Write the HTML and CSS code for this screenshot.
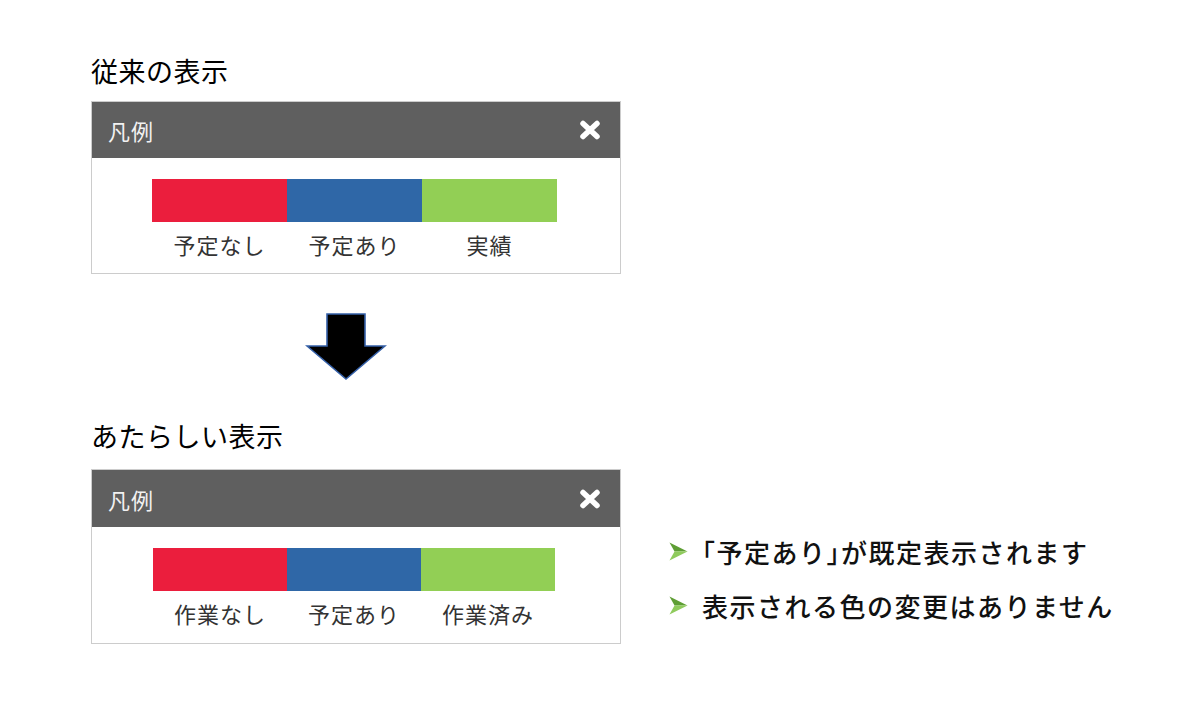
FILE: index.html
```html
<!DOCTYPE html>
<html>
<head>
    <title>凡例の表示</title>
    <link rel="stylesheet" href="styles.css">
</head>
<body>
    <div class="page">
        <h2 class="title first">従来の表示</h2>
        <div class="panel">
            <div class="panel-head">
                <span>凡例</span>
                <svg class="close" width="22" height="20" viewBox="0 0 22 20">
                    <path d="M4 3.5 L18 16.5 M18 3.5 L4 16.5" stroke="#fff" stroke-width="5.5" stroke-linecap="round"/>
                </svg>
            </div>
            <div class="panel-body">
                <div class="legend">
                    <div class="bars">
                        <div class="bar red"></div>
                        <div class="bar blue"></div>
                        <div class="bar green"></div>
                    </div>
                    <div class="labels">
                        <span>予定なし</span>
                        <span>予定あり</span>
                        <span>実績</span>
                    </div>
                </div>
            </div>
        </div>

        <div class="arrow">
            <svg width="82" height="68" viewBox="0 0 82 68">
                <polygon points="22,1 60,1 60,33 80,33 41,66 2,33 22,33" fill="#000" stroke="#3560a8" stroke-width="1.6"/>
            </svg>
        </div>

        <h2 class="title second">あたらしい表示</h2>
        <div class="row">
            <div class="panel new">
                <div class="panel-head">
                    <span>凡例</span>
                    <svg class="close" width="22" height="20" viewBox="0 0 22 20">
                        <path d="M4 3.5 L18 16.5 M18 3.5 L4 16.5" stroke="#fff" stroke-width="5.5" stroke-linecap="round"/>
                    </svg>
                </div>
                <div class="panel-body">
                    <div class="legend">
                        <div class="bars">
                            <div class="bar red"></div>
                            <div class="bar blue"></div>
                            <div class="bar green"></div>
                        </div>
                        <div class="labels">
                            <span>作業なし</span>
                            <span>予定あり</span>
                            <span>作業済み</span>
                        </div>
                    </div>
                </div>
            </div>
            <ul class="notes">
                <li>
                    <svg class="mark" width="19" height="19" viewBox="0 0 19 19">
                        <polygon points="0.5,0.5 18.5,9.5 5.5,9.5" fill="#5e9e34"/>
                        <polygon points="5.5,9.5 18.5,9.5 0.5,18.5" fill="#8fcb5c"/>
                    </svg>
                    <span><span class="br">「</span>予定あり<span class="br">」</span>が既定表示されます</span>
                </li>
                <li>
                    <svg class="mark" width="19" height="19" viewBox="0 0 19 19">
                        <polygon points="0.5,0.5 18.5,9.5 5.5,9.5" fill="#5e9e34"/>
                        <polygon points="5.5,9.5 18.5,9.5 0.5,18.5" fill="#8fcb5c"/>
                    </svg>
                    <span>表示される色の変更はありません</span>
                </li>
            </ul>
        </div>
    </div>
</body>
</html>
```

FILE: styles.css
```css
body {
    margin: 0;
    padding: 0;
    background-color: #ffffff;
    font-family: "Noto Sans CJK JP", "Noto Sans", sans-serif;
}
.page {
    padding-left: 91px;
}
.title {
    margin: 0;
    font-size: 27px;
    font-weight: normal;
    line-height: 36px;
    letter-spacing: 0.5px;
    color: #000000;
}
.title.first {
    padding-top: 53px;
    margin-bottom: 12px;
}
.title.second {
    margin-top: 37px;
    margin-bottom: 15px;
}
.panel {
    width: 528px;
    border: 1px solid #cccccc;
    flex-shrink: 0;
}
.panel-head {
    height: 56px;
    background-color: #5f5f5f;
    display: flex;
    align-items: center;
    justify-content: space-between;
    padding: 0 19px 0 16px;
    color: #f2f2f2;
    font-size: 22px;
    letter-spacing: 1px;
}
.panel.new .panel-head {
    height: 57px;
}
.close {
    display: block;
}
.panel-body {
    padding: 21px 0 7px 60px;
}
.panel.new .panel-body {
    padding-bottom: 8px;
    padding-left: 61px;
}
.legend {
    width: 405px;
}
.panel.new .legend {
    width: 402px;
}
.bars {
    display: flex;
    height: 43px;
}
.bar {
    flex: 1;
}
.red {
    background-color: #eb1e3d;
}
.blue {
    background-color: #2f67a7;
}
.green {
    background-color: #92cf55;
}
.labels {
    display: flex;
    height: 44px;
    line-height: 44px;
    font-size: 22px;
    letter-spacing: 1px;
    color: #333333;
}
.labels span {
    flex: 1;
    text-align: center;
}
.arrow {
    margin-top: 39px;
    padding-left: 214px;
    height: 68px;
}
.arrow svg {
    display: block;
}
.row {
    display: flex;
    align-items: flex-start;
}
.notes {
    list-style: none;
    margin: 0 0 0 48px;
    padding: 55px 0 0;
}
.notes li {
    display: flex;
    align-items: center;
    gap: 14px;
    height: 54px;
    font-size: 26px;
    font-weight: 500;
    letter-spacing: 1.5px;
    color: #111111;
}
.notes .br {
    font-feature-settings: "halt";
}
.mark {
    display: block;
    flex-shrink: 0;
}
```
